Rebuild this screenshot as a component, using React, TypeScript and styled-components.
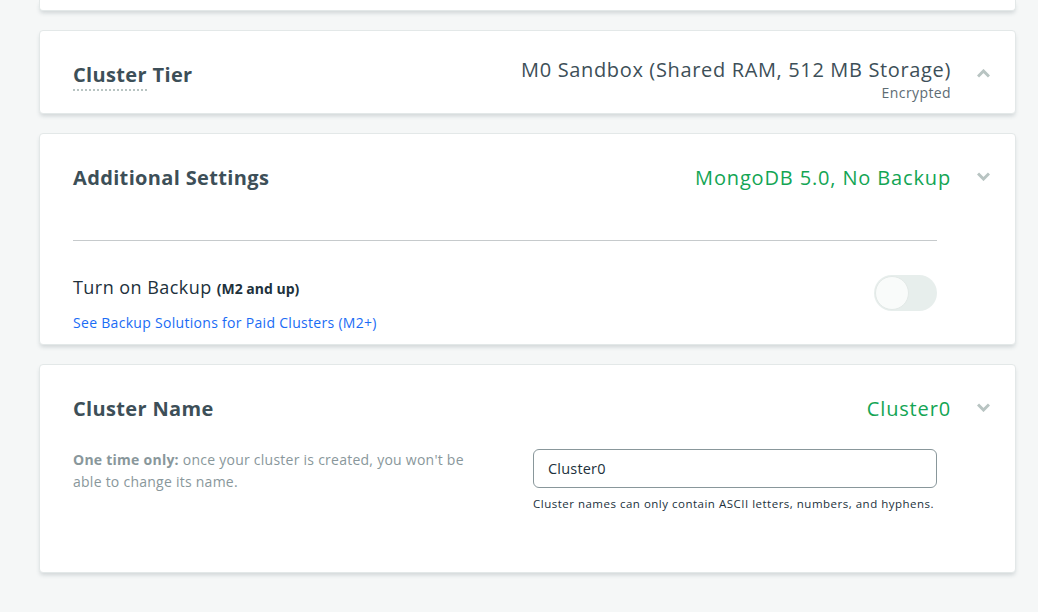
import React from "react";
import styled, { createGlobalStyle } from "styled-components";

const Global = createGlobalStyle`
  html, body { margin: 0; padding: 0; background: #f5f7f7; }
  body { font-family: "Open Sans", "Liberation Sans", sans-serif; -webkit-font-smoothing: antialiased; }
  * { box-sizing: border-box; }
`;

const Page = styled.div`
  width: 1038px;
  height: 612px;
  overflow: hidden;
  padding: 0 22px 0 39px;
  display: flex;
  flex-direction: column;
  gap: 19px;
`;

const Card = styled.section<{ $clip?: boolean }>`
  width: 977px;
  flex: none;
  background: #fff;
  border: 1px solid #e3e8e8;
  border-radius: ${(p) => (p.$clip ? "0 0 4px 4px" : "4px")};
  box-shadow: 0 3px 4px -1px rgba(40, 60, 70, 0.18);
  ${(p) => (p.$clip ? "height: 11px; border-top: none;" : "")}
`;

const Header = styled.div<{ $pb?: number }>`
  display: flex;
  align-items: flex-start;
  padding: 26px 25px ${(p) => p.$pb ?? 0}px 33px;
`;

const Title = styled.h2`
  margin: 5px 0 0;
  flex: 1;
  font-size: 20px;
  line-height: 26px;
  font-weight: 700;
  letter-spacing: 0.35px;
  color: #3d4f58;
`;

const Dotted = styled.span`
  border-bottom: 2px dotted #b8c4c2;
  padding-bottom: 1px;
`;

const Summary = styled.div<{ $offset?: number }>`
  margin-top: ${(p) => p.$offset ?? 0}px;
  display: flex;
  flex-direction: column;
  align-items: flex-end;
`;

const SummaryMain = styled.div<{ $green?: boolean }>`
  font-size: 20px;
  line-height: 26px;
  letter-spacing: ${(p) => (p.$green ? "0.85px" : "0.65px")};
  color: ${(p) => (p.$green ? "#13a554" : "#3d4f58")};
  white-space: nowrap;
`;

const SummarySub = styled.div`
  font-size: 14px;
  line-height: 20px;
  letter-spacing: 0.4px;
  color: #5d6c74;
`;

const Chevron = styled.svg`
  margin: 12px 0 0 26px;
  flex: none;
`;

const Body = styled.div<{ $pt: number; $pb: number }>`
  padding: ${(p) => p.$pt}px 78px ${(p) => p.$pb}px 33px;
`;

const Divider = styled.hr`
  margin: 0;
  border: none;
  border-top: 1px solid #c6cacc;
`;

const BackupRow = styled.div`
  display: flex;
  justify-content: space-between;
  align-items: flex-start;
  margin-top: 34px;
`;

const BackupLabel = styled.div`
  font-size: 18px;
  line-height: 24px;
  letter-spacing: 0.45px;
  color: #21313c;
  & b { font-size: 14px; font-weight: 700; letter-spacing: 0; }
`;

const Link = styled.a`
  display: block;
  margin-top: 12px;
  font-size: 14px;
  line-height: 20px;
  letter-spacing: 0.3px;
  color: #1a6cf5;
  text-decoration: none;
`;

const Toggle = styled.div`
  width: 63px;
  height: 36px;
  border-radius: 18px;
  background: #e7eeec;
  padding: 1px;
  display: flex;
`;

const Knob = styled.div`
  width: 34px;
  height: 34px;
  border-radius: 50%;
  background: #f9fbfa;
  border: 1px solid #e3e9e7;
`;

const NameRow = styled.div`
  display: flex;
  justify-content: space-between;
  align-items: flex-start;
`;

const Desc = styled.p`
  margin: 0;
  width: 400px;
  font-size: 14px;
  line-height: 22px;
  letter-spacing: 0.25px;
  color: #89979b;
  & b { font-weight: 700; }
`;

const Field = styled.div`
  width: 404px;
`;

const Input = styled.input`
  display: block;
  width: 100%;
  height: 39px;
  border: 1px solid #89979b;
  border-radius: 6px;
  padding: 0 14px;
  font-family: inherit;
  font-size: 14.5px;
  letter-spacing: 0.2px;
  color: #21313c;
  outline: none;
`;

const Help = styled.div`
  margin-top: 8px;
  font-size: 11.5px;
  line-height: 16px;
  letter-spacing: 0.5px;
  color: #21313c;
`;

const Chev = ({ up }: { up?: boolean }) => (
  <Chevron width="13" height="9" viewBox="0 0 13 9">
    <polyline
      points={up ? "1,7.5 6.5,2 12,7.5" : "1,1.5 6.5,7 12,1.5"}
      fill="none"
      stroke="#b8c4c2"
      strokeWidth="3"
    />
  </Chevron>
);

export default function App() {
  return (
    <>
      <Global />
      <Page>
        <Card $clip />
        <Card>
          <Header $pb={10}>
            <Title>
              <Dotted>Cluster</Dotted> Tier
            </Title>
            <Summary>
              <SummaryMain>M0 Sandbox (Shared RAM, 512 MB Storage)</SummaryMain>
              <SummarySub>Encrypted</SummarySub>
            </Summary>
            <Chev up />
          </Header>
        </Card>
        <Card>
          <Header>
            <Title>Additional Settings</Title>
            <Summary $offset={5}>
              <SummaryMain $green>MongoDB 5.0, No Backup</SummaryMain>
            </Summary>
            <Chev />
          </Header>
          <Body $pt={49} $pb={11}>
            <Divider />
            <BackupRow>
              <div>
                <BackupLabel>
                  Turn on Backup <b>(M2 and up)</b>
                </BackupLabel>
                <Link href="#">See Backup Solutions for Paid Clusters (M2+)</Link>
              </div>
              <Toggle>
                <Knob />
              </Toggle>
            </BackupRow>
          </Body>
        </Card>
        <Card>
          <Header>
            <Title>Cluster Name</Title>
            <Summary $offset={5}>
              <SummaryMain $green>Cluster0</SummaryMain>
            </Summary>
            <Chev />
          </Header>
          <Body $pt={27} $pb={60}>
            <NameRow>
              <Desc>
                <b>One time only:</b> once your cluster is created, you won't be
                able to change its name.
              </Desc>
              <Field>
                <Input defaultValue="Cluster0" />
                <Help>Cluster names can only contain ASCII letters, numbers, and hyphens.</Help>
              </Field>
            </NameRow>
          </Body>
        </Card>
      </Page>
    </>
  );
}
